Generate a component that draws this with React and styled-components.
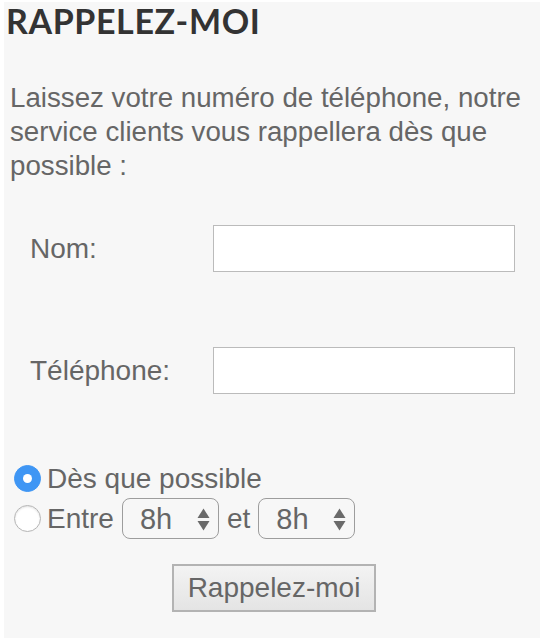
import React, { useState } from "react";
import styled, { createGlobalStyle } from "styled-components";

const GlobalStyle = createGlobalStyle`
  html, body {
    margin: 0;
    padding: 0;
    background: #ffffff;
  }
  body {
    font-family: "Liberation Sans", Arial, sans-serif;
  }
`;

function SelectArrows() {
  return (
    <svg width="13" height="23" viewBox="0 0 13 23">
      <path d="M6.5 0.5 L12.5 10 L0.5 10 Z" fill="#6a6a6a" />
      <path d="M6.5 22.5 L12.5 13 L0.5 13 Z" fill="#6a6a6a" />
    </svg>
  );
}

function HourSelect({ value, onChange }) {
  return (
    <S.SelectWrap>
      <S.Select value={value} onChange={(e) => onChange(e.target.value)}>
        {Array.from({ length: 11 }, (_, i) => i + 8).map((h) => (
          <option key={h} value={`${h}h`}>
            {h}h
          </option>
        ))}
      </S.Select>
      <S.Arrows>
        <SelectArrows />
      </S.Arrows>
    </S.SelectWrap>
  );
}

function App() {
  const [when, setWhen] = useState("asap");
  const [from, setFrom] = useState("8h");
  const [to, setTo] = useState("8h");

  return (
    <>
      <GlobalStyle />
      <S.Panel>
        <S.Title>RAPPELEZ-MOI</S.Title>
        <S.Intro>
          Laissez votre numéro de téléphone, notre service clients vous
          rappellera dès que possible :
        </S.Intro>

        <S.Fields>
          <S.Label htmlFor="nom">Nom:</S.Label>
          <S.Input id="nom" type="text" />
          <S.Label htmlFor="tel">Téléphone:</S.Label>
          <S.Input id="tel" type="tel" />
        </S.Fields>

        <S.Choices>
          <S.Choice>
            <S.Radio
              type="radio"
              name="when"
              checked={when === "asap"}
              onChange={() => setWhen("asap")}
            />
            Dès que possible
          </S.Choice>
          <S.Choice>
            <S.Radio
              type="radio"
              name="when"
              checked={when === "range"}
              onChange={() => setWhen("range")}
            />
            Entre
            <HourSelect value={from} onChange={setFrom} />
            et
            <HourSelect value={to} onChange={setTo} />
          </S.Choice>
        </S.Choices>

        <S.Actions>
          <S.Button type="button">Rappelez-moi</S.Button>
        </S.Actions>
      </S.Panel>
    </>
  );
}

export default App;

const S = {
  Panel: styled.div`
    margin: 2px 2px 4px 4px;
    height: 636px;
    box-sizing: border-box;
    background: #f7f7f7;
    padding: 0 0 0 6px;
    color: #666;
  `,
  Title: styled.h2`
    margin: 0 0 0 -4px;
    padding-top: 0;
    font-family: Lato, "Open Sans", sans-serif;
    font-weight: 700;
    font-size: 34px;
    line-height: 38px;
    letter-spacing: 0.6px;
    color: #333;
  `,
  Intro: styled.p`
    margin: 41px 0 0;
    font-size: 27.7px;
    line-height: 34px;
    color: #666;
  `,
  Fields: styled.div`
    display: grid;
    grid-template-columns: 183px 302px;
    row-gap: 75px;
    align-items: center;
    margin-top: 42px;
    padding-left: 20px;
  `,
  Label: styled.label`
    font-size: 28px;
    color: #666;
  `,
  Input: styled.input`
    box-sizing: border-box;
    height: 47px;
    width: 302px;
    border: 1px solid #bbb;
    background: #fff;
    font-size: 24px;
    padding: 0 8px;
    outline: none;
  `,
  Choices: styled.div`
    display: flex;
    flex-direction: column;
    gap: 0;
    margin-top: 65px;
  `,
  Choice: styled.label`
    display: flex;
    align-items: center;
    gap: 8px;
    font-size: 28px;
    line-height: 39px;
    color: #666;
  `,
  Radio: styled.input`
    appearance: none;
    margin: 0 -2px 0 4px;
    width: 27px;
    height: 27px;
    border-radius: 50%;
    border: 1px solid #b5b5b5;
    background: #fff;
    box-shadow: inset 0 1px 2px rgba(0, 0, 0, 0.12);
    display: grid;
    place-content: center;

    &:checked {
      border-color: #3f96f4;
      background: #3f96f4;
      box-shadow: none;
    }

    &:checked::before {
      content: "";
      width: 9px;
      height: 9px;
      border-radius: 50%;
      background: #fff;
    }
  `,
  SelectWrap: styled.span`
    position: relative;
    display: inline-block;
    height: 41px;
  `,
  Select: styled.select`
    appearance: none;
    box-sizing: border-box;
    width: 97px;
    height: 41px;
    padding: 0 0 0 17px;
    border: 1.5px solid #9d9d9d;
    border-radius: 8px;
    background: #f7f7f7;
    font-family: "Liberation Sans", Arial, sans-serif;
    font-size: 29px;
    color: #666;
    outline: none;
  `,
  Arrows: styled.span`
    position: absolute;
    right: 9px;
    top: 10px;
    pointer-events: none;
    display: flex;
  `,
  Actions: styled.div`
    display: flex;
    padding-left: 162px;
    margin-top: 25px;
  `,
  Button: styled.button`
    width: 204px;
    height: 48px;
    border: 2px solid #b3b3b3;
    background: linear-gradient(#f3f3f3, #e4e4e4);
    font-family: "Liberation Sans", Arial, sans-serif;
    font-size: 28px;
    color: #666;
    padding: 0;
  `,
};
